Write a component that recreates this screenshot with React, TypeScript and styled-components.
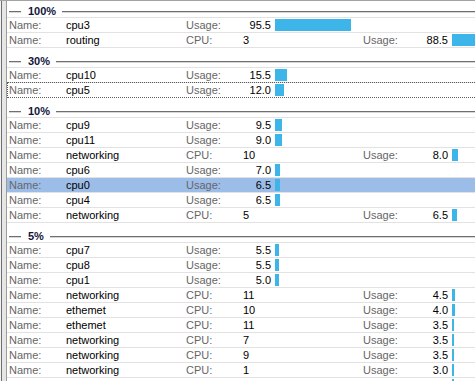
import React from 'react';
import styled, { createGlobalStyle, css } from 'styled-components';

const GlobalStyle = createGlobalStyle`
  html, body {
    margin: 0;
    padding: 0;
    background: #fff;
    overflow: hidden;
  }
  body {
    font-family: 'Liberation Sans', Arial, sans-serif;
    font-size: 11px;
  }
`;

type Item = {
  name: string;
  usage: number;
  cpu?: number;
  focused?: boolean;
  selected?: boolean;
};

type Group = { title: string; items: Item[] };

const groups: Group[] = [
  {
    title: '100%',
    items: [
      { name: 'cpu3', usage: 95.5 },
      { name: 'routing', cpu: 3, usage: 88.5 },
    ],
  },
  {
    title: '30%',
    items: [
      { name: 'cpu10', usage: 15.5 },
      { name: 'cpu5', usage: 12.0, focused: true },
    ],
  },
  {
    title: '10%',
    items: [
      { name: 'cpu9', usage: 9.5 },
      { name: 'cpu11', usage: 9.0 },
      { name: 'networking', cpu: 10, usage: 8.0 },
      { name: 'cpu6', usage: 7.0 },
      { name: 'cpu0', usage: 6.5, selected: true },
      { name: 'cpu4', usage: 6.5 },
      { name: 'networking', cpu: 5, usage: 6.5 },
    ],
  },
  {
    title: '5%',
    items: [
      { name: 'cpu7', usage: 5.5 },
      { name: 'cpu8', usage: 5.5 },
      { name: 'cpu1', usage: 5.0 },
      { name: 'networking', cpu: 11, usage: 4.5 },
      { name: 'ethemet', cpu: 10, usage: 4.0 },
      { name: 'ethemet', cpu: 11, usage: 3.5 },
      { name: 'networking', cpu: 7, usage: 3.5 },
      { name: 'networking', cpu: 9, usage: 3.5 },
      { name: 'networking', cpu: 1, usage: 3.0 },
      { name: 'networking', cpu: 4, usage: 3.0 },
    ],
  },
];

const Frame = styled.div`
  display: flex;
  width: 475px;
  height: 381px;
  box-sizing: border-box;
  border-top: 1px solid #a3a3a3;
  overflow: hidden;
`;

const Edge = styled.div`
  flex: 0 0 7px;
  background: linear-gradient(
    to right,
    #f2f2f2 0 1px,
    #6f6f6f 1px 2px,
    #e6e6e6 2px 6px,
    #9c9c9c 6px 7px
  );
`;

const List = styled.div`
  flex: 1;
  min-width: 0;
  overflow: hidden;
`;

const GroupBox = styled.div`
  & + & {
    margin-top: 3px;
  }
`;

const GroupHeader = styled.div`
  display: flex;
  align-items: center;
  height: 16px;
  box-sizing: border-box;
  padding: 4px 0 0 2px;
  font-weight: bold;
  color: #14143c;
  line-height: 12px;
`;

const HeaderRule = styled.span<{ $grow?: boolean }>`
  display: block;
  height: 1px;
  background: #6f6f6f;
  border-bottom: 1px solid #d6d6d6;
  margin-top: 1px;
  ${(p) =>
    p.$grow
      ? css`
          flex: 1;
        `
      : css`
          width: 12px;
          flex: 0 0 12px;
        `}
`;

const HeaderText = styled.span`
  padding: 0 6px 0 7px;
`;

const Rows = styled.div`
  border-top: 1px solid #e2e2e2;
`;

const Row = styled.div<{ $selected?: boolean; $focused?: boolean }>`
  display: flex;
  align-items: center;
  height: 15px;
  box-sizing: border-box;
  padding-left: 2px;
  border-bottom: 1px solid #e2e2e2;
  white-space: nowrap;
  line-height: 14px;
  background: ${(p) => (p.$selected ? '#9dbde9' : 'transparent')};
  ${(p) =>
    p.$focused &&
    css`
      height: 16px;
      margin-top: -1px;
      padding-left: 1px;
      border-top: 1px dotted #5a5a5a;
      border-bottom: 1px dotted #5a5a5a;
      border-left: 1px dotted #5a5a5a;
    `}
`;

const Label = styled.span`
  flex: 0 0 57px;
  color: #666;
`;

const Value = styled.span`
  flex: 0 0 120px;
  color: #000;
`;

const Number = styled.span`
  flex: 0 0 28px;
  text-align: right;
  color: #000;
`;

const Bar = styled.span`
  flex: 0 0 auto;
  height: 12px;
  margin-left: 4px;
  background: #3eb5e9;
`;

const Field = ({ label, value }: { label: string; value: React.ReactNode }) => (
  <>
    <Label>{label}</Label>
    <Value>{value}</Value>
  </>
);

const Meter = ({ value }: { value: number }) => (
  <>
    <Label>Usage:</Label>
    <Number>{value.toFixed(1)}</Number>
    <Bar style={{ width: Math.floor(value * 0.8) }} />
  </>
);

const ItemRow = ({ item }: { item: Item }) => (
  <Row $selected={item.selected} $focused={item.focused}>
    <Field label="Name:" value={item.name} />
    {item.cpu !== undefined && <Field label="CPU:" value={item.cpu} />}
    <Meter value={item.usage} />
  </Row>
);

export default function App() {
  return (
    <>
      <GlobalStyle />
      <Frame>
        <Edge />
        <List>
          {groups.map((g) => (
            <GroupBox key={g.title}>
              <GroupHeader>
                <HeaderRule />
                <HeaderText>{g.title}</HeaderText>
                <HeaderRule $grow />
              </GroupHeader>
              <Rows>
                {g.items.map((it, i) => (
                  <ItemRow key={i} item={it} />
                ))}
              </Rows>
            </GroupBox>
          ))}
        </List>
      </Frame>
    </>
  );
}
